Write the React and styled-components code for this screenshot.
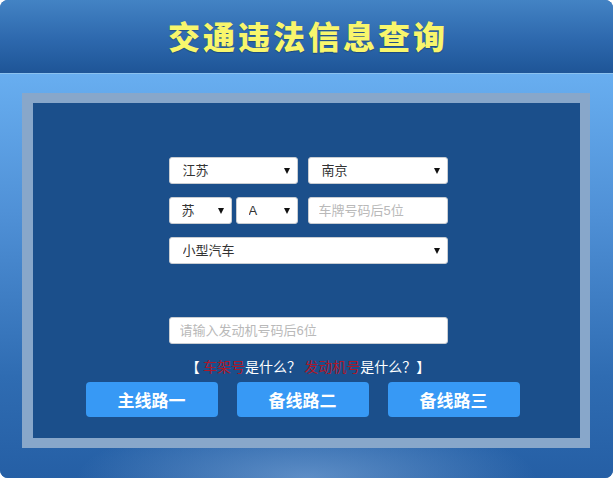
import styled, { createGlobalStyle } from 'styled-components';

const Global = createGlobalStyle`
  html, body {
    margin: 0;
    padding: 0;
    background: #fff;
  }
  body {
    font-family: "Liberation Sans", "Noto Sans CJK SC", sans-serif;
  }
  * {
    box-sizing: border-box;
  }
`;

const Card = styled.div`
  width: 613px;
  height: 478px;
  border-radius: 8px;
  overflow: hidden;
  display: flex;
  flex-direction: column;
  background: #2c66ab;
`;

const Header = styled.header`
  height: 74px;
  flex: none;
  display: flex;
  align-items: center;
  justify-content: center;
  background: linear-gradient(180deg, #4383c4 0%, #2d68ad 55%, #1e5597 100%);
  border-bottom: 1px solid #8cc2ef;
`;

const Title = styled.h1`
  margin: 0 0 4px 0;
  color: #f8f66c;
  font-family: "Noto Sans CJK SC", sans-serif;
  font-size: 32px;
  font-weight: 900;
  letter-spacing: 3px;
  padding-left: 3px;
  text-shadow: 0 1px 1px rgba(0, 0, 0, 0.25);
`;

const Body = styled.div`
  flex: 1;
  padding: 19px 23px 30px 22px;
  display: flex;
  background:
    radial-gradient(ellipse 230px 60px at 50% 100%, rgba(140, 180, 225, 0.55), rgba(140, 180, 225, 0) 100%),
    linear-gradient(180deg, #68aef0 0%, #4f90d6 35%, #2f6cb2 75%, #255fa5 100%);
`;

const Frame = styled.div`
  flex: 1;
  border: 10px solid rgba(225, 240, 255, 0.55);
  border-left-width: 11px;
  background: #1b4f8b;
  display: flex;
  flex-direction: column;
  align-items: center;
  padding: 54px 0 0 3px;
`;

const Form = styled.div`
  width: 279px;
  display: grid;
  grid-template-columns: 129px 140px;
  column-gap: 10px;
  row-gap: 13px;
`;

const Pair = styled.div`
  display: grid;
  grid-template-columns: 63px 62px;
  column-gap: 4px;
`;

const SelectBox = styled.div`
  position: relative;
  height: 27px;
  grid-column: ${p => (p.$wide ? '1 / span 2' : 'auto')};

  &::after {
    content: '';
    position: absolute;
    right: 8px;
    top: 11px;
    border-left: 3px solid transparent;
    border-right: 3px solid transparent;
    border-top: 6px solid #111;
    pointer-events: none;
  }
`;

const Select = styled.select`
  appearance: none;
  width: 100%;
  height: 100%;
  border: 1px solid #c9cdd2;
  border-radius: 3px;
  background: #fff;
  color: #333;
  font-family: "Liberation Sans", "Noto Sans CJK SC", sans-serif;
  font-size: 13px;
  padding: 0 0 0 ${p => (p.$pad || 13)}px;
  outline: none;
`;

const Input = styled.input`
  width: 100%;
  height: 27px;
  border: 1px solid #c9cdd2;
  border-radius: 3px;
  background: #fff;
  font-family: "Liberation Sans", "Noto Sans CJK SC", sans-serif;
  font-size: 13px;
  padding: 0 10px;
  outline: none;
  grid-column: ${p => (p.$wide ? '1 / span 2' : 'auto')};

  &::placeholder {
    color: #b9b9b9;
  }
`;

const Spacer = styled.div`
  grid-column: 1 / span 2;
  height: 27px;
`;

const Help = styled.p`
  margin: 12px 0 0 0;
  color: #fff;
  font-family: "Noto Sans CJK SC", sans-serif;
  font-size: 14px;
  line-height: 20px;
  white-space: pre;
`;

const Red = styled.span`
  color: #ad1829;
`;

const Buttons = styled.div`
  display: flex;
  gap: 19px;
  margin-top: 6px;
  margin-right: 11px;
`;

const Button = styled.button`
  width: 132px;
  height: 35px;
  border: none;
  border-radius: 4px;
  background: #3799f5;
  color: #fff;
  font-family: "Noto Sans CJK SC", sans-serif;
  font-size: 17px;
  font-weight: 700;
  cursor: pointer;
`;

export default function App() {
  return (
    <>
      <Global />
      <Card>
        <Header>
          <Title>交通违法信息查询</Title>
        </Header>
        <Body>
          <Frame>
            <Form>
              <SelectBox>
                <Select defaultValue="江苏">
                  <option>江苏</option>
                </Select>
              </SelectBox>
              <SelectBox>
                <Select defaultValue="南京">
                  <option>南京</option>
                </Select>
              </SelectBox>
              <Pair>
                <SelectBox>
                  <Select $pad={12} defaultValue="苏">
                    <option>苏</option>
                  </Select>
                </SelectBox>
                <SelectBox>
                  <Select $pad={12} defaultValue="A">
                    <option>A</option>
                  </Select>
                </SelectBox>
              </Pair>
              <Input placeholder="车牌号码后5位" />
              <SelectBox $wide>
                <Select defaultValue="小型汽车">
                  <option>小型汽车</option>
                </Select>
              </SelectBox>
              <Spacer />
              <Input $wide placeholder="请输入发动机号码后6位" />
            </Form>
            <Help>
              【 <Red>车架号</Red>是什么？ <Red>发动机号</Red>是什么？】
            </Help>
            <Buttons>
              <Button>主线路一</Button>
              <Button>备线路二</Button>
              <Button>备线路三</Button>
            </Buttons>
          </Frame>
        </Body>
      </Card>
    </>
  );
}
